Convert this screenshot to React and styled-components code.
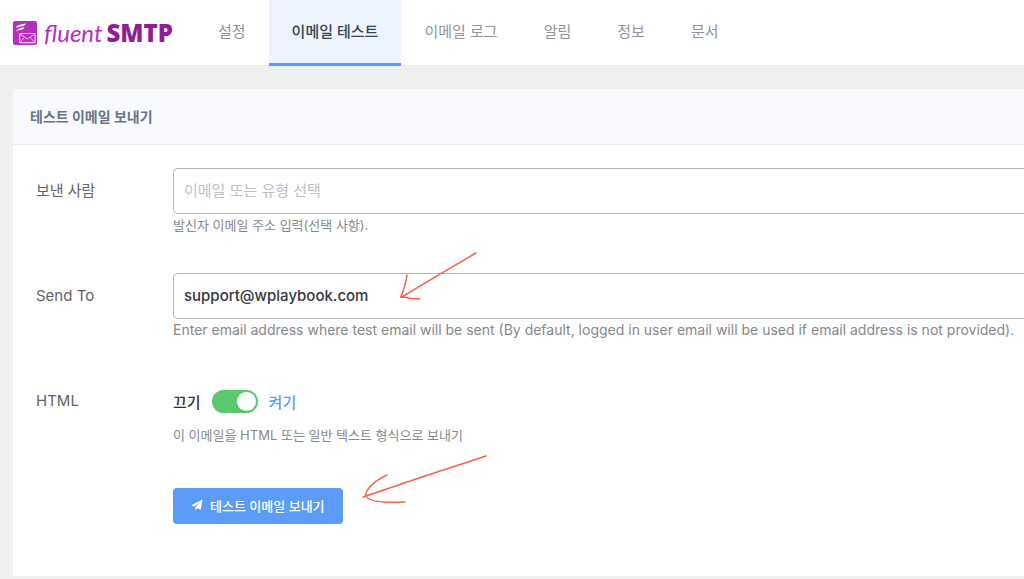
import React, { useState } from 'react';
import styled, { createGlobalStyle } from 'styled-components';

const tabs = ['설정', '이메일 테스트', '이메일 로그', '알림', '정보', '문서'];

function App() {
  const [active, setActive] = useState('이메일 테스트');
  const [from, setFrom] = useState('');
  const [sendTo, setSendTo] = useState('support@wplaybook.com');
  const [html, setHtml] = useState(true);

  return (
    <>
      <GlobalStyle />
      <Header>
        <Logo href='#home'>
          <LogoMark />
          <LogoText>
            <Fluent>fluent</Fluent>
            <Smtp>SMTP</Smtp>
          </LogoText>
        </Logo>
        <Nav>
          {tabs.map((tab) => (
            <NavLink
              key={tab}
              href='#tab'
              $active={tab === active}
              onClick={() => setActive(tab)}
            >
              {tab}
            </NavLink>
          ))}
        </Nav>
      </Header>
      <Card>
        <CardTitle>테스트 이메일 보내기</CardTitle>
        <Form onSubmit={(e) => e.preventDefault()}>
          <Row>
            <Label htmlFor='from'>보낸 사람</Label>
            <Field>
              <Input
                id='from'
                type='text'
                placeholder='이메일 또는 유형 선택'
                value={from}
                onChange={(e) => setFrom(e.target.value)}
              />
              <Hint>발신자 이메일 주소 입력(선택 사항).</Hint>
            </Field>
          </Row>
          <Row>
            <Label htmlFor='to'>Send To</Label>
            <Field>
              <Input
                id='to'
                type='email'
                value={sendTo}
                onChange={(e) => setSendTo(e.target.value)}
              />
              <Hint $latin>
                Enter email address where test email will be sent (By default, logged in user email will be used if email address is not provided).
              </Hint>
              <InputArrow width='90' height='60' viewBox='0 0 90 60' aria-hidden='true'>
                <path d='M80 8 Q42 30 6 52 M11 30 Q9 43 5 51 Q4 53 7 52 Q15 54 24 54' />
              </InputArrow>
            </Field>
          </Row>
          <Row>
            <Label htmlFor='html'>HTML</Label>
            <Field>
              <SwitchLine>
                <SwitchText $on={!html}>끄기</SwitchText>
                <Switch
                  id='html'
                  type='checkbox'
                  checked={html}
                  onChange={(e) => setHtml(e.target.checked)}
                />
                <SwitchText $on={html}>켜기</SwitchText>
              </SwitchLine>
              <Hint>이 이메일을 HTML 또는 일반 텍스트 형식으로 보내기</Hint>
            </Field>
          </Row>
          <Actions>
            <SendButton type='submit'>
              <PlaneIcon />
              테스트 이메일 보내기
            </SendButton>
            <ButtonArrow width='140' height='60' viewBox='0 0 140 60' aria-hidden='true'>
              <path d='M132 6 Q70 26 9 47 M33 25 C20 31 10 41 12 46 C15 52 32 53 51 52' />
            </ButtonArrow>
          </Actions>
        </Form>
      </Card>
    </>
  );
}

function LogoMark() {
  return (
    <svg width='24' height='24' viewBox='0 0 24 24' aria-hidden='true'>
      <rect width='24' height='24' rx='2' fill='#b62fc0' />
      <path
        d='M2.5 6.4C5 3.6 8.5 2.9 13.2 2.4C12.7 4.6 9 5.4 2.5 6.4ZM2.5 10.8C4 7.8 7 6.8 11.2 6.2C10.7 8.4 8 9.1 5.5 9.3C4.5 9.5 3.5 10.1 2.5 10.8Z'
        fill='#fff'
      />
      <g fill='none' stroke='#f0c0f3' strokeWidth='1.2'>
        <rect x='6.7' y='12.5' width='15.3' height='9.2' rx='0.6' />
        <path d='M7 13L14.4 18L21.7 13M7 21.4L11.5 16.4M21.7 21.4L17.2 16.4' strokeWidth='1' />
      </g>
    </svg>
  );
}

function PlaneIcon() {
  return (
    <svg width='12' height='12' viewBox='0 0 12 12' fill='#fff' aria-hidden='true'>
      <path d='M11.5 0.5L0.3 6.3L3.3 7.8L9.3 2.8L4.4 8.4L4.4 11.5L6.3 9.2L9.7 10.8Z' />
    </svg>
  );
}

const GlobalStyle = createGlobalStyle`
  * {
    box-sizing: border-box;
  }

  body {
    margin: 0;
    background: #efefef;
    color: #606266;
    font-family: Inter, 'Noto Sans CJK KR', sans-serif;
    font-size: 15px;
  }

  input, button {
    font-family: inherit;
  }
`;

const Header = styled.header`
  display: flex;
  height: 66px;
  background: #fff;
  border-bottom: 1px solid #ededed;
`;

const Logo = styled.a`
  display: flex;
  align-items: center;
  flex-shrink: 0;
  width: 195px;
  padding-left: 13px;
  gap: 7px;
  text-decoration: none;
`;

const LogoText = styled.span`
  display: flex;
  align-items: baseline;
  gap: 4px;
  font-size: 24px;
  line-height: 24px;
`;

const Fluent = styled.span`
  color: #b62fc0;
  font-family: Lato, sans-serif;
  font-style: italic;
  font-weight: 400;
`;

const Smtp = styled.span`
  color: #931c97;
  font-family: 'Open Sans', sans-serif;
  font-weight: 800;
`;

const Nav = styled.nav`
  display: flex;
`;

const NavLink = styled.a`
  height: 66px;
  padding: 0 23px;
  border-bottom: 3px solid ${({ $active }) => ($active ? '#569bff' : 'transparent')};
  background: ${({ $active }) => ($active ? '#ebf4ff' : 'transparent')};
  color: ${({ $active }) => ($active ? '#3c434a' : '#909399')};
  font-weight: ${({ $active }) => ($active ? 500 : 400)};
  line-height: 63px;
  text-decoration: none;
  white-space: nowrap;
`;

const Card = styled.main`
  margin: 23px 0 0 13px;
  background: #fff;
`;

const CardTitle = styled.h1`
  margin: 0;
  padding: 0 17px;
  border-bottom: 1px solid #e8eaed;
  background: #f8fafd;
  color: #697386;
  font-size: 14px;
  font-weight: 700;
  line-height: 55px;
`;

const Form = styled.form`
  padding: 23px 0 52px 23px;
`;

const Row = styled.div`
  display: flex;
  margin-bottom: 37px;
`;

const Label = styled.label`
  flex-shrink: 0;
  width: 137px;
  line-height: 46px;
`;

const Field = styled.div`
  position: relative;
  flex: 1;
  min-width: 0;
`;

/* the field runs off the right edge of the window */
const Input = styled.input`
  display: block;
  width: 100%;
  height: 46px;
  padding: 0 10px 1px;
  border: 1px solid #b4b6ba;
  border-right: 0;
  border-radius: 5px 0 0 5px;
  outline: none;
  background: #fff;
  color: #32373c;
  font-size: 15px;
  font-weight: 500;

  &::placeholder {
    color: #bcc0c8;
    font-weight: 400;
    opacity: 1;
  }
`;

const Hint = styled.p`
  margin: 0;
  color: #86888c;
  font-size: ${({ $latin }) => ($latin ? '14px' : '13px')};
  line-height: 22px;
  white-space: nowrap;
`;

const SwitchLine = styled.div`
  display: flex;
  align-items: center;
  gap: 11px;
  height: 46px;
`;

const SwitchText = styled.span`
  color: ${({ $on }) => ($on ? '#569bff' : '#303133')};
  font-weight: 500;
`;

const Switch = styled.input`
  appearance: none;
  display: flex;
  align-items: center;
  width: 46px;
  height: 23px;
  margin: 0;
  padding: 0 2px;
  border-radius: 12px;
  background: ${({ checked }) => (checked ? '#5ac96d' : '#dcdfe6')};
  cursor: pointer;

  &::before {
    content: '';
    width: 19px;
    height: 19px;
    margin-left: ${({ checked }) => (checked ? 'auto' : '0')};
    border-radius: 50%;
    background: #fff;
  }
`;

const Actions = styled.div`
  position: relative;
  padding: 5px 0 0 137px;
`;

const SendButton = styled.button`
  display: flex;
  align-items: center;
  gap: 7px;
  height: 36px;
  padding: 0 18px 2px;
  border: 0;
  border-radius: 4px;
  background: #5a9cf8;
  color: #fff;
  font-size: 13px;
  font-weight: 500;
  cursor: pointer;
`;

const Arrow = styled.svg`
  position: absolute;
  fill: none;
  stroke: #f9604c;
  stroke-width: 1.5;
  stroke-linecap: round;
  stroke-linejoin: round;
  pointer-events: none;
`;

const InputArrow = styled(Arrow)`
  top: -28px;
  left: 223px;
`;

const ButtonArrow = styled(Arrow)`
  top: -33px;
  left: 318px;
`;

export default App;
